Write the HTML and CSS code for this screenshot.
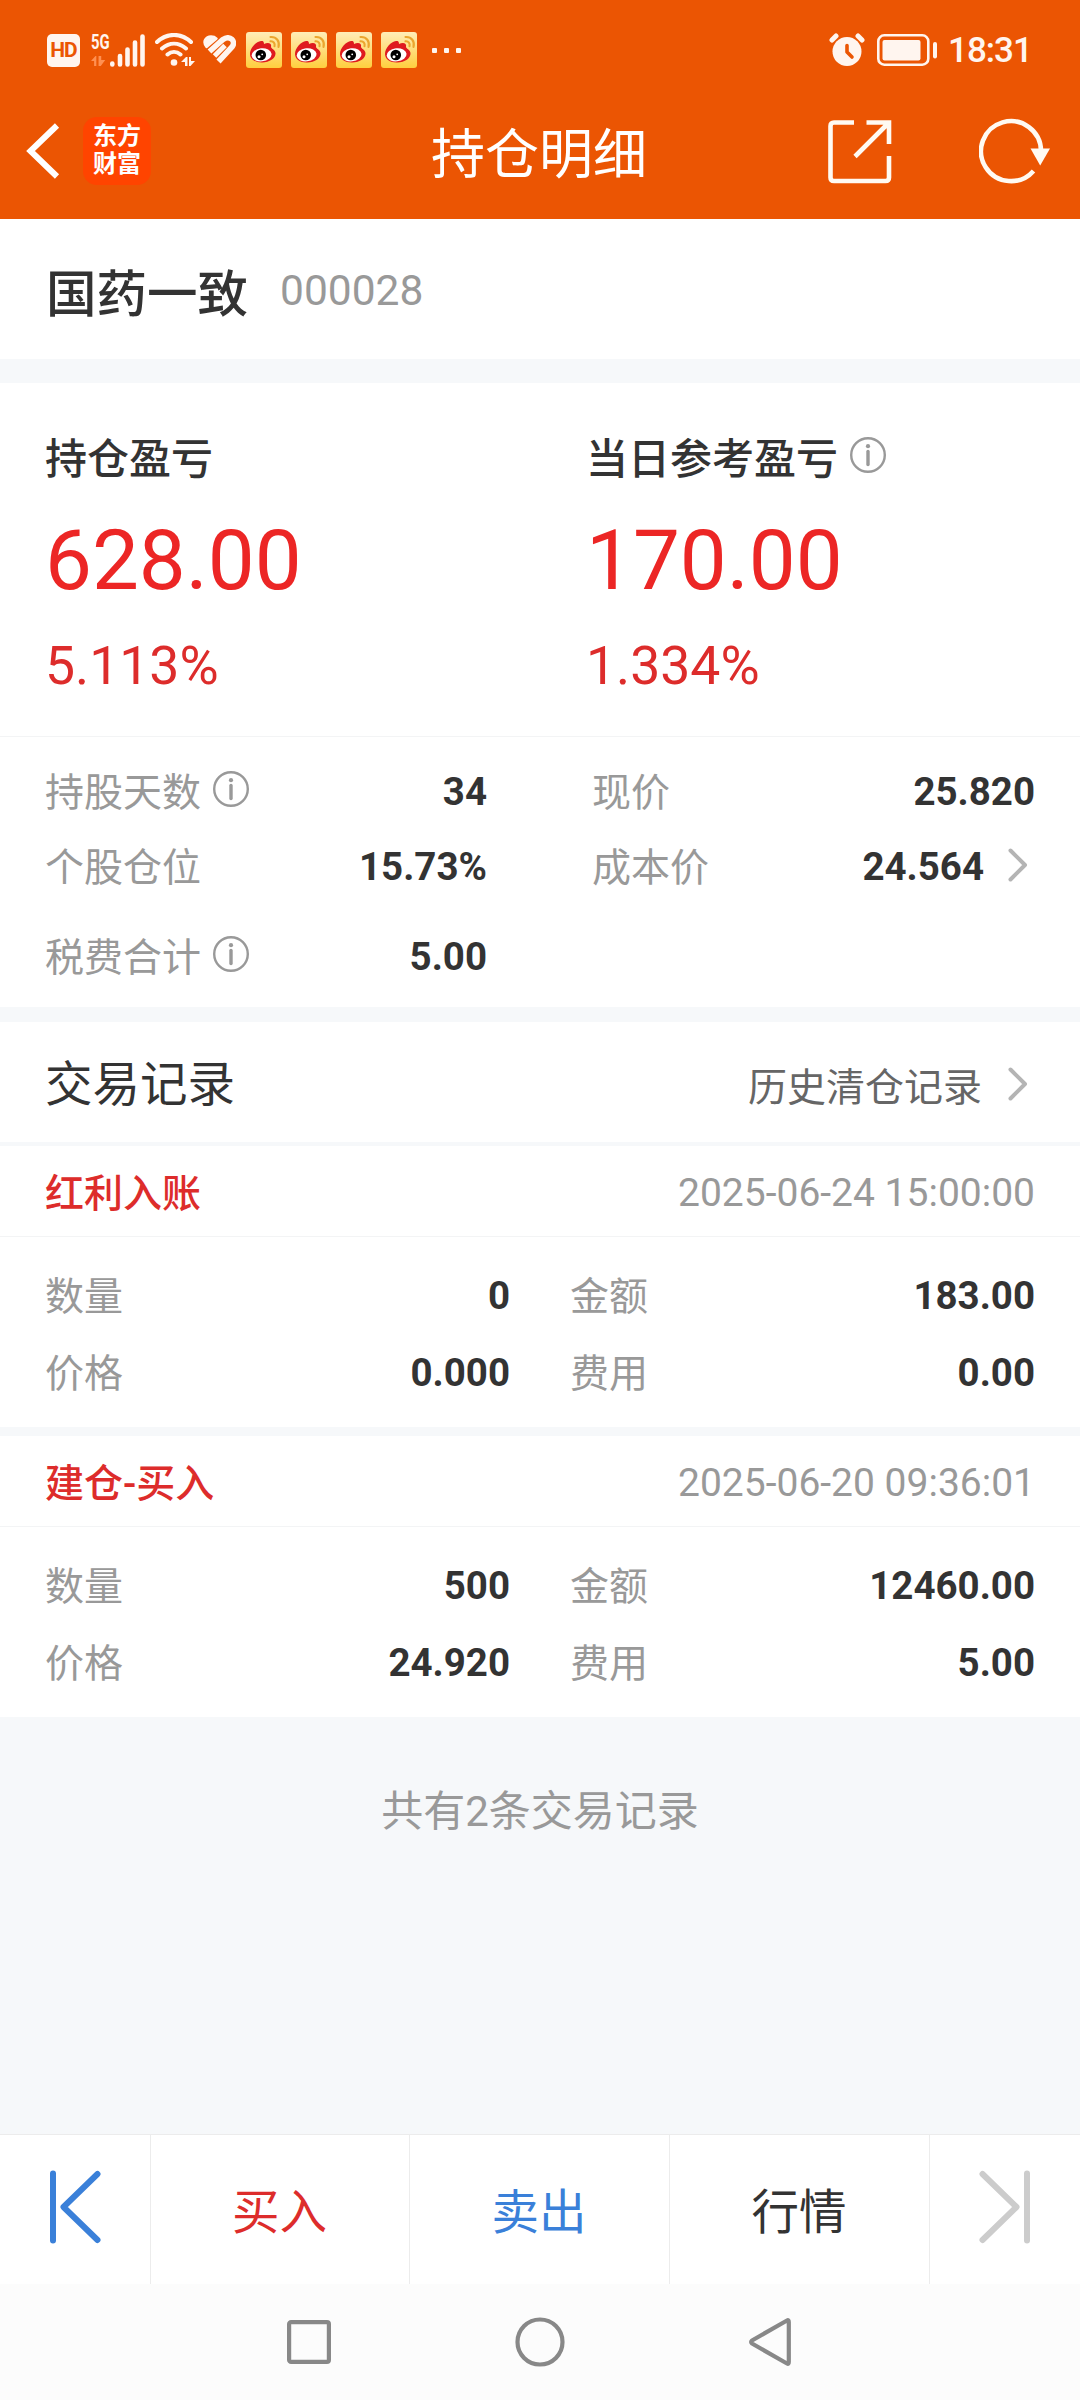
FILE: index.html
```
<!DOCTYPE html>
<html lang="zh-CN">

<head>
    <meta charset="UTF-8">
    <meta name="viewport" content="width=device-width, initial-scale=1.0">
    <title>持仓明细</title>
    <link rel="stylesheet" href="styles.css">
</head>

<body>
    <!-- 公用图标 -->
    <svg class="symbols" width="0" height="0">
        <symbol id="icon-info" viewBox="0 0 36 36">
            <circle cx="18" cy="18" r="16.8" fill="none" stroke="#999" stroke-width="2.4"/>
            <circle cx="18" cy="9.2" r="2.1" fill="#999"/>
            <path d="M18 14.5v13" stroke="#999" stroke-width="3.4" stroke-linecap="round"/>
        </symbol>
        <symbol id="icon-more" viewBox="0 0 20 34">
            <path d="M2.5 2.5L17 17L2.5 31.5" fill="none" stroke="#b4b4b4" stroke-width="4" stroke-linecap="round" stroke-linejoin="round"/>
        </symbol>
        <symbol id="icon-weibo" viewBox="0 0 36 36">
            <defs>
                <linearGradient id="weibo-bg" x1="0" y1="0" x2="0" y2="1">
                    <stop offset="0" stop-color="#ffedb8"/>
                    <stop offset="1" stop-color="#ffcf3e"/>
                </linearGradient>
            </defs>
            <rect width="36" height="36" rx="3" fill="url(#weibo-bg)"/>
            <path d="M4 22C4 16 10 9.5 15 9C18 8.5 18 11 18 12C22 10 26 11 25 15C25 16.5 29 17.5 29.5 21C30 26 24 30.5 16 30.5C9 30.5 4 27 4 22Z" fill="#df1a1f"/>
            <ellipse cx="15.6" cy="22.8" rx="10" ry="6.6" fill="#fff" transform="rotate(-6 15.6 22.8)"/>
            <circle cx="14.8" cy="23" r="5.3" fill="#000"/>
            <circle cx="13" cy="24.8" r="1.5" fill="#fff"/>
            <circle cx="16.2" cy="22.3" r=".9" fill="#fff"/>
            <path d="M24.5 9.3C27.5 9 29.3 11.500 28.5 14.2M24.5 5C30.5 4.5 34 9.5 32.5 15" fill="none" stroke="#eba62e" stroke-width="2.1" stroke-linecap="round"/>
        </symbol>
    </svg>

    <!-- 顶部 -->
    <header class="header">
        <div class="status-bar">
            <span class="hd">HD</span>
            <div class="network">
                <span class="network-type">5G</span>
                <svg width="16" height="12" viewBox="0 0 18 12" fill="#ff9052">
                    <path d="M0 6L5 0.5H6V11.5H3.5V6ZM8.5 0.5H11.5V5L16 5L11 11.5H8.5Z"/>
                </svg>
            </div>
            <svg class="signal" width="35" height="33" viewBox="0 0 35 33" fill="none" stroke="#fff5ef" stroke-width="4.6" stroke-linecap="round">
                <path d="M2.3 29.5V30.5M10 22V30.5M17.5 15.5V30.5M25 8.5V30.5M32.5 2.5V30.5"/>
            </svg>
            <svg class="wifi" width="40" height="34" viewBox="0 0 40 34" fill="none" stroke="#fff5ef" stroke-width="4" stroke-linecap="round">
                <path d="M2 9C12 -0.5 26 -0.5 36 9M7 15.5C14.5 9 23.5 9 31 15.5M12.5 21.5C16.5 18 21.5 18 25.5 21.5"/>
                <circle cx="19" cy="29.5" r="3.3" fill="#fff5ef" stroke="none"/>
                <path d="M26 29L31 24H32.5V33H30V29ZM34 24H36V28H40L35.5 33H34Z" fill="#fff5ef" stroke="none"/>
            </svg>
            <svg class="health" width="33" height="30" viewBox="0 0 33 30" fill="none" stroke="#fff5ef">
                <path d="M3.5 12C-1 6.500 3 1.5 8 1.5C10.500 1.500 12.500 2.500 13.5 3.500Z" fill="#fff5ef" stroke-width="2.400" stroke-linejoin="round"/>
                <path d="M6.500 16.500L20 4.500C27 -0.500 33.500 6.500 29 12L15.500 26.500" stroke-width="5.600"/>
                <path d="M11.500 21L22 10.500" stroke-width="5"/>
            </svg>
            <div class="notices">
                <svg width="36" height="36"><use href="#icon-weibo"/></svg>
                <svg width="36" height="36"><use href="#icon-weibo"/></svg>
                <svg width="36" height="36"><use href="#icon-weibo"/></svg>
                <svg width="36" height="36"><use href="#icon-weibo"/></svg>
            </div>
            <div class="dots"><i></i><i></i><i></i></div>

            <svg class="alarm" width="36" height="34" viewBox="0 0 36 34">
                <path d="M3 7L7 3M33 7L29 3" stroke="#fff5ef" stroke-width="5" stroke-linecap="round"/>
                <circle cx="18" cy="18.5" r="14.5" fill="#fff5ef"/>
                <path d="M18 12.5V19L23 24" fill="none" stroke="#eb5503" stroke-width="3.6" stroke-linecap="round" stroke-linejoin="round"/>
            </svg>
            <svg class="battery" width="60" height="32" viewBox="0 0 60 32">
                <rect x="1.3" y="1.3" width="50" height="29.4" rx="6" fill="none" stroke="#fff5ef" stroke-width="2.6"/>
                <rect x="5.5" y="6" width="38" height="20.5" rx="2" fill="#fff5ef"/>
                <rect x="56" y="8" width="4" height="16.5" rx="2" fill="#fff5ef"/>
            </svg>
            <span class="time">18:31</span>
        </div>
        <div class="nav-bar">
            <svg class="back" width="34" height="56" viewBox="0 0 34 56" fill="none" stroke="#fff" stroke-width="6">
                <path d="M31 2.5L4.5 28L31 53.5"/>
            </svg>
            <div class="app-logo">
                <span>东方</span>
                <span>财富</span>
            </div>
            <h1 class="title">持仓明细</h1>
            <svg class="share" width="64" height="64" viewBox="0 0 64 64" fill="none" stroke="#fffaf2" stroke-width="4.6">
                <path d="M26 2.5H6Q2.5 2.5 2.5 6V57.5Q2.5 61 6 61H57.5Q61 61 61 57.5V36"/>
                <path d="M38.5 2.5H61V24M61 2.5L27 36.5"/>
            </svg>
            <svg class="refresh" width="72" height="66" viewBox="0 0 72 66">
                <path d="M54.5 53A30 30 0 1 1 62 33" fill="none" stroke="#fffaf2" stroke-width="4.6"/>
                <path d="M51.5 30.5H71L61.2 47.5Z" fill="#fffaf2"/>
            </svg>
        </div>
    </header>

    <!-- 股票名称 -->
    <section class="stock">
        <span class="stock-name">国药一致</span>
        <span class="stock-code">000028</span>
    </section>

    <!-- 盈亏 -->
    <section class="profit">
        <div class="profit-item">
            <div class="profit-label">持仓盈亏</div>
            <div class="profit-value">628.00</div>
            <div class="profit-rate">5.113%</div>
        </div>
        <div class="profit-item">
            <div class="profit-label">当日参考盈亏<svg class="info" width="36" height="36"><use href="#icon-info"/></svg></div>
            <div class="profit-value">170.00</div>
            <div class="profit-rate">1.334%</div>
        </div>
    </section>

    <!-- 持仓数据 -->
    <section class="stats">
        <div class="row">
            <div class="cell">
                <span class="label">持股天数<svg class="info" width="36" height="36"><use href="#icon-info"/></svg></span>
                <span class="value">34</span>
            </div>
            <div class="cell">
                <span class="label">现价</span>
                <span class="value">25.820</span>
            </div>
        </div>
        <div class="row">
            <div class="cell">
                <span class="label">个股仓位</span>
                <span class="value">15.73%</span>
            </div>
            <div class="cell">
                <span class="label">成本价</span>
                <span class="value">24.564</span>
                <svg class="more" width="20" height="34"><use href="#icon-more"/></svg>
            </div>
        </div>
        <div class="row row-tax">
            <div class="cell">
                <span class="label">税费合计<svg class="info" width="36" height="36"><use href="#icon-info"/></svg></span>
                <span class="value">5.00</span>
            </div>
        </div>
    </section>

    <!-- 交易记录 -->
    <section class="records">
        <div class="records-head">
            <h2>交易记录</h2>
            <span class="history">历史清仓记录</span>
            <svg class="more" width="20" height="34"><use href="#icon-more"/></svg>
        </div>

        <div class="record">
            <div class="record-head">
                <span class="record-type">红利入账</span>
                <span class="record-time">2025-06-24 15:00:00</span>
            </div>
            <div class="record-body">
                <div class="cell"><span class="label">数量</span><span class="value">0</span></div>
                <div class="cell"><span class="label">金额</span><span class="value">183.00</span></div>
                <div class="cell"><span class="label">价格</span><span class="value">0.000</span></div>
                <div class="cell"><span class="label">费用</span><span class="value">0.00</span></div>
            </div>
        </div>

        <div class="record">
            <div class="record-head">
                <span class="record-type">建仓-买入</span>
                <span class="record-time">2025-06-20 09:36:01</span>
            </div>
            <div class="record-body">
                <div class="cell"><span class="label">数量</span><span class="value">500</span></div>
                <div class="cell"><span class="label">金额</span><span class="value">12460.00</span></div>
                <div class="cell"><span class="label">价格</span><span class="value">24.920</span></div>
                <div class="cell"><span class="label">费用</span><span class="value">5.00</span></div>
            </div>
        </div>
    </section>

    <div class="total">共有2条交易记录</div>

    <!-- 底部操作栏 -->
    <footer class="action-bar">
        <div class="action action-side">
            <svg width="54" height="74" viewBox="0 0 54 74" fill="none" stroke="#3a80d9" stroke-width="6" stroke-linecap="round" stroke-linejoin="round">
                <path d="M5 3.5V70.5M49.5 4L15.5 37L49.5 70"/>
            </svg>
        </div>
        <div class="action buy">买入</div>
        <div class="action sell">卖出</div>
        <div class="action">行情</div>
        <div class="action action-side">
            <svg width="54" height="74" viewBox="0 0 54 74" fill="none" stroke="#ccc" stroke-width="6" stroke-linecap="round" stroke-linejoin="round">
                <path d="M49 3.5V70.5M4.5 4L38.5 37L4.5 70"/>
            </svg>
        </div>
    </footer>

    <!-- 系统导航键 -->
    <div class="system-nav">
        <svg width="44" height="44" viewBox="0 0 44 44" fill="none" stroke="#888" stroke-width="4.2">
            <rect x="2.1" y="2.1" width="39.8" height="39.8" rx="2"/>
        </svg>
        <svg width="50" height="50" viewBox="0 0 50 50" fill="none" stroke="#888" stroke-width="4.2">
            <circle cx="25" cy="25" r="22.5"/>
        </svg>
        <svg width="42" height="50" viewBox="0 0 42 50" fill="none" stroke="#888" stroke-width="4.2" stroke-linejoin="round">
            <path d="M38 3.5Q39.8 2.5 39.8 5V45Q39.8 47.5 38 46.5L3 26.5Q1.5 25 3 23.5Z"/>
        </svg>
    </div>
</body>

</html>
```
FILE: styles.css
```
/* 全局样式 */
* {
    box-sizing: border-box;
}

body {
    margin: 0;
    width: 1080px;
    height: 2400px;
    display: flex;
    flex-direction: column;
    font-family: Roboto, "Noto Sans CJK SC", sans-serif;
    font-size: 39px;
    background-color: #f6f8fa;
    color: #333;
    overflow: hidden;
}

h1,
h2 {
    margin: 0;
    font-weight: 400;
}

svg {
    flex: none;
    display: block;
}

.symbols {
    position: absolute;
}

/* 顶部 */
.header {
    height: 219px;
    background: #eb5503;
    color: #fff;
}

.status-bar {
    display: flex;
    align-items: center;
    height: 100px;
    padding: 0 49px 0 47px;
}

.hd {
    width: 33px;
    height: 33px;
    border-radius: 5px;
    background: #fff5ef;
    color: #eb5503;
    font-size: 21px;
    font-weight: 700;
    letter-spacing: -1px;
    line-height: 33px;
    text-align: center;
}

.network {
    display: flex;
    flex-direction: column;
    gap: 5px;
    width: 19px;
    margin-left: 11px;
}

.network-type {
    height: 16px;
    font-size: 20px;
    font-weight: 700;
    line-height: 16px;
    color: #fff5ef;
    transform: scaleX(0.74);
    transform-origin: left;
}

.wifi {
    margin-left: 10px;
}

.health {
    margin-left: 8px;
}

.notices {
    display: flex;
    gap: 9px;
    margin-left: 10px;
}

.dots {
    display: flex;
    gap: 7px;
    margin: 0 auto 0 15px;
}

.dots i {
    width: 5px;
    height: 5px;
    background: #fff5ef;
    border-radius: 1px;
}

.battery {
    margin-left: 12px;
}

.time {
    width: 82px;
    margin-left: 11px;
    margin-right: 1px;
    font-size: 35px;
    font-weight: 500;
    letter-spacing: -1px;
    color: #fff5ef;
}

.nav-bar {
    display: flex;
    align-items: center;
    height: 102px;
    padding: 0 29px 0 26px;
}

.app-logo {
    display: flex;
    flex-direction: column;
    align-items: center;
    width: 68px;
    height: 68px;
    margin-left: 23px;
    padding-top: 5px;
    border-radius: 14px;
    background: #ff4400;
    font-size: 24px;
    font-weight: 700;
    line-height: 28px;
}

.title {
    margin: 9px 0 0 280px;
    font-size: 54px;
    line-height: 80px;
}

.share {
    margin: 2px 0 0 auto;
}

.refresh {
    margin-left: 87px;
}

/* 股票名称 */
.stock {
    display: flex;
    align-items: center;
    gap: 32px;
    height: 140px;
    padding: 1px 46px 0;
    background: #fff;
}

.stock-name {
    font-size: 50.5px;
    font-weight: 500;
}

.stock-code {
    margin-top: 2px;
    font-size: 42.5px;
    color: #999;
}

/* 盈亏 */
.profit {
    display: grid;
    grid-template-columns: 541px 1fr;
    margin-top: 24px;
    padding: 42px 0 40px 45px;
    background: #fff;
}

.profit-label {
    display: flex;
    align-items: center;
    height: 60px;
    font-size: 42px;
    font-weight: 500;
}

.profit-value {
    margin-top: 21px;
    font-size: 83.5px;
    line-height: 110px;
    color: #ec2625;
}

.profit-rate {
    margin-top: 20px;
    font-size: 53.5px;
    line-height: 60px;
    color: #dd2c2b;
}

.info {
    margin: 0 0 0 12px;
}

/* 持仓数据 */
.stats {
    height: 271px;
    padding: 17px 45px 0;
    border-top: 1px solid #f3f4f5;
    background: #fff;
}

.row {
    display: grid;
    grid-template-columns: 442px 443px;
    column-gap: 105px;
    height: 75px;
}

.row-tax {
    margin-top: 15px;
}

.cell {
    display: flex;
    align-items: center;
}

.label {
    display: flex;
    align-items: center;
    margin-top: -6px;
    color: #999;
}

.value {
    margin-left: auto;
    font-size: 38.5px;
    font-weight: 700;
}

.more {
    margin: -4px 7px 0 24px;
}

/* 交易记录 */
.records {
    margin-top: 15px;
}

.records-head {
    display: flex;
    align-items: center;
    height: 120px;
    margin-bottom: 4px;
    padding: 0 45px;
    background: #fff;
}

.records-head h2 {
    margin-top: -4px;
    font-size: 47.5px;
}

.records-head .more {
    margin-top: 3px;
}

.history {
    margin: 3px 2px 0 auto;
    color: #666;
}

.record {
    background: #fff;
}

.record + .record {
    margin-top: 9px;
}

.record-head {
    display: flex;
    justify-content: space-between;
    align-items: center;
    height: 91px;
    padding: 0 45px;
    border-bottom: 1px solid #f3f4f5;
}

.record-type {
    margin-top: -3px;
    font-weight: 500;
    color: #dd2c2b;
}

.record-time {
    margin-top: 3px;
    color: #999;
}

.record-body {
    display: grid;
    grid-template-columns: 465px 465px;
    grid-auto-rows: 77px;
    column-gap: 60px;
    padding: 20px 45px 16px;
}

.total {
    margin-top: 65px;
    font-size: 42px;
    line-height: 60px;
    text-align: center;
    color: #999;
}

/* 底部操作栏 */
.action-bar {
    display: grid;
    grid-template-columns: 151px 259px 260px 260px 150px;
    height: 150px;
    margin-top: auto;
    border-top: 1px solid #ececec;
    background: #fff;
}

.action {
    display: flex;
    justify-content: center;
    align-items: center;
    padding: 0 1px 2px 0;
    border-right: 1px solid #ececec;
    font-size: 47.5px;
}

.action:last-child {
    border-right: none;
}

.action-side {
    padding: 0 0 5px;
}

.buy {
    color: #dd2c2b;
}

.sell {
    color: #3a80d9;
}

/* 系统导航键 */
.system-nav {
    display: flex;
    justify-content: center;
    align-items: center;
    gap: 184px;
    height: 116px;
    padding-right: 2px;
    background: #fcfcfc;
}
```
